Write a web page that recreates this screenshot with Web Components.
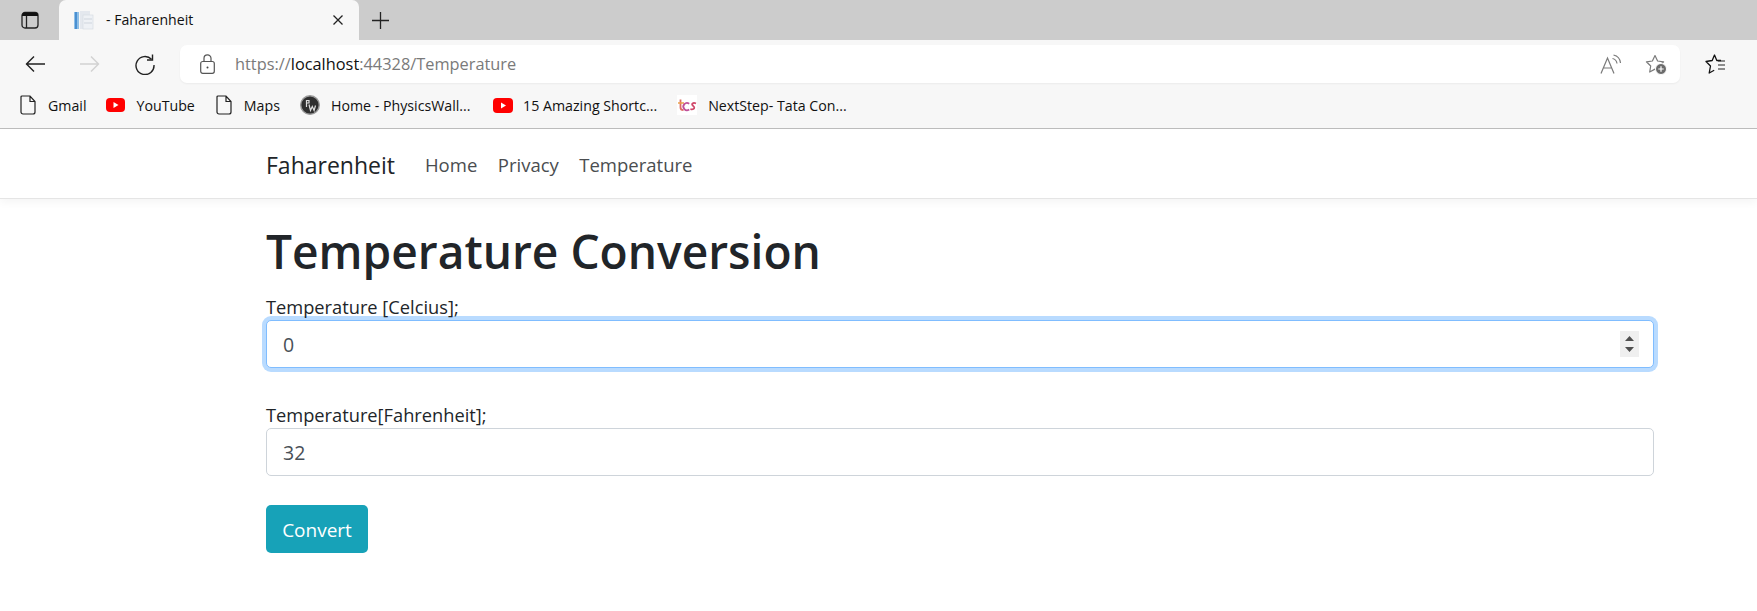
<!DOCTYPE html>
<html lang="en"><head><meta charset="utf-8"><title>Faharenheit</title>
<style>
html,body{margin:0;padding:0;background:#fff;overflow:hidden}
body{width:1757px;height:611px;font-family:"Open Sans","Noto Sans",sans-serif;color:#212529}
</style></head><body>
<template id="t-tabstrip"><style>
:host{display:flex;height:40px;background:#ccc;align-items:flex-end}
.side{width:59px;height:40px;display:flex;align-items:center;justify-content:center;flex:none}
.tab{width:300px;height:40px;background:#f7f7f7;border-radius:7px 7px 0 0;display:flex;align-items:center;box-sizing:border-box;padding-left:15px;flex:none;font:14.100px "Open Sans",sans-serif;color:#111}
.tab svg.f{margin-right:12px;flex:none}
.tab span{flex:1;white-space:nowrap;position:relative;top:-.5px}
.x{margin-right:15px;flex:none}
.plus{margin-left:13px;flex:none}
</style>
<div class="side"><svg width="18" height="18" viewBox="0 0 18 18" fill="none"><rect x="1" y="1.500" width="16" height="15.500" rx="3" stroke="#222" stroke-width="1.300"/><path d="M1 4.500a3 3 0 0 1 3-3h10a3 3 0 0 1 3 3V5H1z" fill="#111"/><path d="M5.500 5v12" stroke="#222" stroke-width="1.300"/></svg></div>
<div class="tab">
<svg class="f" width="20" height="20" viewBox="0 0 20 20"><rect x="6" y="1" width="10" height="18" fill="#e4e8ee"/><rect x="9" y="5" width="10" height="14" fill="#eef1f5" stroke="#d3d9e0" stroke-width=".6"/><rect x="0" y="2" width="5" height="17" fill="#8fbfe6"/><rect x="1" y="2" width="2" height="17" fill="#4a90d2"/><path d="M10 9h8M10 13h8" stroke="#cfd5dd"/></svg>
<span><slot></slot></span>
<svg class="x" width="12" height="12" viewBox="0 0 12 12"><path d="M1.500 1.500l9 9M10.500 1.500l-9 9" stroke="#222" stroke-width="1.300"/></svg>
</div>
<svg class="plus" width="17" height="17" viewBox="0 0 17 17" style="margin-bottom:11px"><path d="M8.500 0v17M0 8.500h17" stroke="#222" stroke-width="1.300"/></svg>
</template>

<template id="t-toolbar"><style>
:host{display:flex;height:44px;background:#f7f7f7;align-items:flex-start;position:relative}
.nav{width:180px;height:38px;flex:none;display:flex;align-items:center;margin-top:5px}
.nav svg{flex:none}
.addr{width:1500px;height:38px;background:#fff;border-radius:7px;display:flex;align-items:center;flex:none;box-shadow:0 1px 2px rgba(0,0,0,.05);margin-top:5px;box-sizing:border-box;padding-left:20px}
.url{font:16.350px "Open Sans",sans-serif;color:#7a7a7a;margin-left:20px;flex:1;white-space:nowrap}
.url b{font-weight:400;color:#111}
</style>
<div class="nav">
<svg style="margin-left:25px" width="20" height="18" viewBox="0 0 20 18" fill="none"><path d="M1 9h19M9 1.500L1.500 9l7.500 7.500" stroke="#222" stroke-width="1.400"/></svg>
<svg style="margin-left:35px" width="20" height="18" viewBox="0 0 20 18" fill="none"><path d="M0 9h19M11 1.500L18.500 9 11 16.500" stroke="#d2d2d2" stroke-width="1.400"/></svg>
<svg style="margin-left:35px" width="20" height="21" viewBox="0 0 20 21" fill="none"><path d="M16.500 5.300A9 9 0 1 0 19 11" stroke="#222" stroke-width="1.400"/><path d="M17.500 .5v5.500h-5.500" stroke="#222" stroke-width="1.400"/></svg>
</div>
<div class="addr">
<svg width="15" height="20" viewBox="0 0 15 20" fill="none" style="flex:none"><rect x=".7" y="7.500" width="13.600" height="11.800" rx="2" stroke="#555" stroke-width="1.200"/><path d="M4 7.500V4.300a3.500 3.500 0 0 1 7 0v3.200" stroke="#555" stroke-width="1.200"/><circle cx="7.500" cy="13.500" r="1" fill="#444"/></svg>
<div class="url">https://<b>localhost</b>:44328/Temperature</div>
<svg width="22" height="20" viewBox="0 0 22 20" fill="none" style="flex:none;margin-right:23px"><path d="M1 19.500L7.500 4 14 19.500M3.300 14h8.400" stroke="#7a7a7a" stroke-width="1.200"/><path d="M12.500 4.500a6 6 0 0 1 4.500 5M13.500 1a9 9 0 0 1 7 8" stroke="#7a7a7a" stroke-width="1.200"/></svg>
<svg width="23" height="21" viewBox="0 0 23 21" fill="none" style="flex:none;margin-right:12px"><path d="M10 1.500l2.600 5.500 6 .8-4.300 4.200 1 6-5.300-2.900-5.300 2.900 1-6L1.400 7.800l6-.8z" stroke="#7a7a7a" stroke-width="1.200" stroke-linejoin="round"/><circle cx="16" cy="15" r="5.500" fill="#6b6b6b" stroke="#fff"/><path d="M16 12.300v5.400M13.300 15h5.400" stroke="#fff" stroke-width="1.200"/></svg>
</div>
<svg width="21" height="20" viewBox="0 0 21 20" fill="none" style="flex:none;margin:14px 0 0 25px"><path d="M16 6.500h-4.200L9.500 1 7.200 6.500 1 7.500l4.500 4.500L4.200 19l5-2.700" stroke="#111" stroke-width="1.300" stroke-linejoin="round"/><path d="M13 7h7M13 11h7M13 15h7" stroke="#222" stroke-width="1.200"/></svg>
</template>

<template id="t-bookmarks"><style>
:host{display:flex;height:45px;box-sizing:border-box;background:#f7f7f7;border-bottom:1px solid #bdbdbd;align-items:center;padding:0 0 2px 18px}
</style><slot></slot></template>

<template id="t-bookmark"><style>
:host{display:flex;align-items:center;font:14.200px "Open Sans",sans-serif;color:#111;white-space:nowrap;flex:none;margin-right:var(--after,20px)}
.i{display:flex;width:20px;height:20px;align-items:center;justify-content:center;flex:none}
</style><div class="i"><slot name="icon"></slot></div><span style="margin-left:var(--gap,10px)"><slot></slot></span></template>

<template id="t-navbar"><style>
:host{display:block;height:70px;box-sizing:border-box;border-bottom:1px solid #e5e5e5;box-shadow:0 4px 8px rgba(0,0,0,.04);background:#fff;position:relative}
.in{display:flex;align-items:center;height:69px;box-sizing:border-box;padding:2px 0 0 266px;font-family:"Open Sans",sans-serif}
.brand{font-size:23px;color:#212529;margin-right:30px}
::slotted(a){font-size:18.500px;color:#4a4d50;text-decoration:none;margin-right:20.500px}
</style><div class="in"><span class="brand">Faharenheit</span><slot></slot></div></template>

<template id="t-field"><style>
:host{display:block;font-family:"Open Sans",sans-serif}
label{display:block;font-size:18.250px;line-height:21px;padding-bottom:3px;color:#212529}
.box{height:48px;box-sizing:border-box;border:1px solid #ced4da;border-radius:5px;display:flex;align-items:center;padding-left:16px;padding-right:14px;background:#fff;font-size:19.500px;color:#495057;justify-content:space-between}
.box span{position:relative;top:.5px}
:host([focused]) .box{border-color:#80bdff;box-shadow:0 0 0 4px #b9dbff}
.sp{width:19px;height:26px;background:#efefef;display:none;align-items:center;justify-content:center}
:host([focused]) .sp{display:flex}
</style><label><slot name="label"></slot></label><div class="box"><span><slot></slot></span><div class="sp"><svg width="9" height="16" viewBox="0 0 9 16"><path d="M4.500 0L9 5H0zM0 11h9l-4.500 5z" fill="#4f4f4f"/></svg></div></div></template>

<template id="t-button"><style>
:host{display:inline-flex;align-items:center;justify-content:center;width:102px;height:48px;box-sizing:border-box;padding-top:1px;background:#17a2b8;color:#fff;border-radius:5px;font:19px "Open Sans",sans-serif}
</style><slot></slot></template>

<template id="t-main"><style>
:host{display:block;padding:0 103px 0 266px;font-family:"Open Sans",sans-serif}
h1{margin:0;padding-top:25px;font-size:46.100px;line-height:56px;font-weight:600;color:#212529;height:72px}
.s{height:36px}
.b{height:29px}
</style><h1><slot name="title"></slot></h1><slot name="a"></slot><div class="s"></div><slot name="b"></slot><div class="b"></div><slot name="c"></slot></template>

<app-tabstrip>- Faharenheit</app-tabstrip>
<app-toolbar></app-toolbar>
<app-bookmarks>
<app-bookmark style="--after:19px"><svg slot="icon" width="16" height="20" viewBox="0 0 16 20" fill="none"><path d="M2 1h8l5 5.500V17a2 2 0 0 1-2 2H3a2 2 0 0 1-2-2V2a1 1 0 0 1 1-1zM10 1v5.500h5" stroke="#222" stroke-width="1.200"/></svg>Gmail</app-bookmark>
<app-bookmark style="--gap:11px;--after:19px"><svg slot="icon" width="19" height="14" viewBox="0 0 19 14"><rect width="19" height="14" rx="4" fill="#f00"/><path d="M7.500 4v6l5-3z" fill="#fff"/></svg>YouTube</app-bookmark>
<app-bookmark style="--after:20px"><svg slot="icon" width="16" height="20" viewBox="0 0 16 20" fill="none"><path d="M2 1h8l5 5.500V17a2 2 0 0 1-2 2H3a2 2 0 0 1-2-2V2a1 1 0 0 1 1-1zM10 1v5.500h5" stroke="#222" stroke-width="1.200"/></svg>Maps</app-bookmark>
<app-bookmark style="--gap:11px;--after:22.500px"><svg slot="icon" width="20" height="20" viewBox="0 0 20 20"><circle cx="10" cy="10" r="9.300" fill="#2f2f2f" stroke="#9a9a9a" stroke-width="1.400"/><path d="M6.500 5v7M6.500 5.500h2.500v2.500H6.500M9 9.500l1.500 6 1.800-4 1.800 4 1.400-5" stroke="#ddd" stroke-width="1.200" fill="none"/></svg>Home - PhysicsWall...</app-bookmark>
<app-bookmark style="--after:20px"><svg slot="icon" width="20" height="15" viewBox="0 0 20 15"><rect width="20" height="15" rx="4" fill="#f00"/><path d="M8 4.500v6l5-3z" fill="#fff"/></svg>15 Amazing Shortc...</app-bookmark>
<app-bookmark style="--gap:11px"><svg slot="icon" width="20" height="20" viewBox="0 0 20 20"><rect width="20" height="20" fill="#fff"/><path d="M3.500 4.500v8c0 2 1 2.700 3 2.700" stroke="#dd6a63" stroke-width="1.800" fill="none"/><path d="M1 8h6" stroke="#e8a04a" stroke-width="1.500"/><path d="M12.200 8.800a3.600 3.600 0 1 0 0 5.700" stroke="#c0509a" stroke-width="1.800" fill="none"/><path d="M19 8.500c-2.800-1.400-5.300.4-3 2.200s1.700 4.200-2.600 3.400" stroke="#d0486a" stroke-width="1.800" fill="none"/></svg>NextStep- Tata Con...</app-bookmark>
</app-bookmarks>
<app-navbar><a>Home</a><a>Privacy</a><a>Temperature</a></app-navbar>
<app-main>
<span slot="title">Temperature Conversion</span>
<app-field slot="a" focused><span slot="label">Temperature [Celcius];</span>0</app-field>
<app-field slot="b"><span slot="label">Temperature[Fahrenheit];</span>32</app-field>
<app-button slot="c">Convert</app-button>
</app-main>

<script>
const reg=(tag,tpl)=>customElements.define(tag,class extends HTMLElement{
constructor(){super();this.attachShadow({mode:'open'}).appendChild(document.getElementById(tpl).content.cloneNode(true));}
});
reg('app-tabstrip','t-tabstrip');
reg('app-toolbar','t-toolbar');
reg('app-bookmarks','t-bookmarks');
reg('app-bookmark','t-bookmark');
reg('app-navbar','t-navbar');
reg('app-field','t-field');
reg('app-button','t-button');
reg('app-main','t-main');
</script>
</body></html>
